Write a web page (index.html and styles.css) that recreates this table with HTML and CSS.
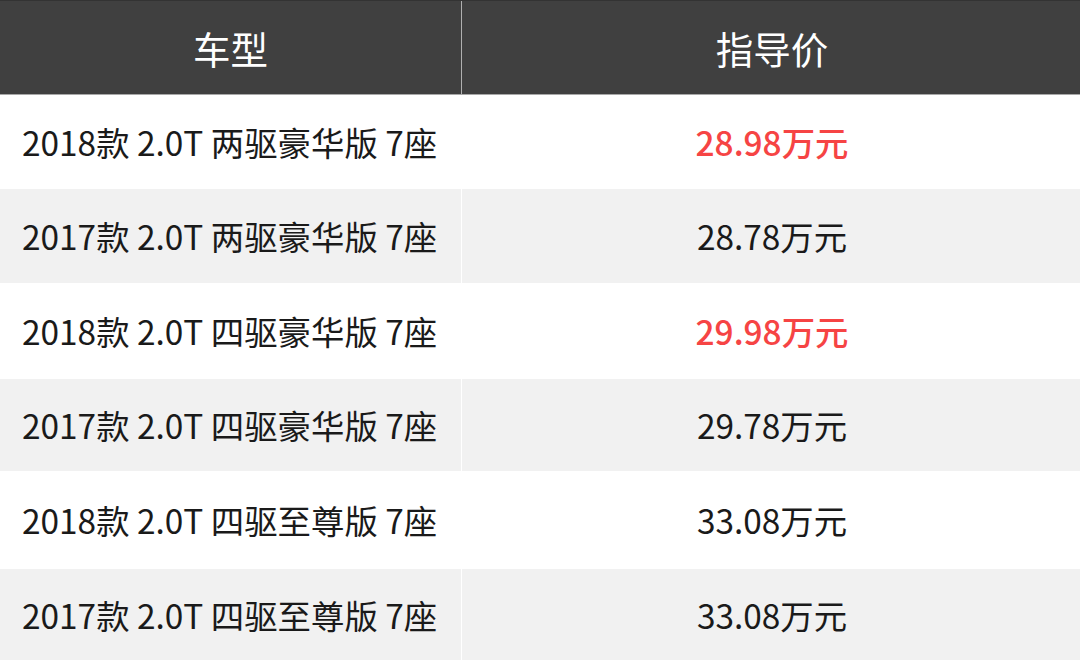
FILE: index.html
```html
<!DOCTYPE html>
<html lang="zh-CN">
<head>
<meta charset="utf-8">
<title>车型指导价</title>
<link rel="stylesheet" href="styles.css">
</head>
<body>
<div class="table">
  <div class="row head">
    <div class="cell name">车型</div>
    <div class="cell price">指导价</div>
  </div>
  <div class="row odd">
    <div class="cell name">2018款 2.0T 两驱豪华版 7座</div>
    <div class="cell price hot">28.98万元</div>
  </div>
  <div class="row even">
    <div class="cell name">2017款 2.0T 两驱豪华版 7座</div>
    <div class="cell price">28.78万元</div>
  </div>
  <div class="row odd">
    <div class="cell name">2018款 2.0T 四驱豪华版 7座</div>
    <div class="cell price hot">29.98万元</div>
  </div>
  <div class="row even">
    <div class="cell name">2017款 2.0T 四驱豪华版 7座</div>
    <div class="cell price">29.78万元</div>
  </div>
  <div class="row odd">
    <div class="cell name">2018款 2.0T 四驱至尊版 7座</div>
    <div class="cell price">33.08万元</div>
  </div>
  <div class="row even">
    <div class="cell name">2017款 2.0T 四驱至尊版 7座</div>
    <div class="cell price">33.08万元</div>
  </div>
</div>
</body>
</html>
```

FILE: styles.css
```css
html, body {
  margin: 0;
  padding: 0;
  background: #ffffff;
}

body {
  font-family: "Noto Sans CJK SC", "Noto Sans", sans-serif;
  color: #1a1a1a;
}

.table {
  width: 1080px;
  display: flex;
  flex-direction: column;
}

.row {
  display: grid;
  grid-template-columns: 462px 1fr;
  height: 94px;
}

.cell {
  display: flex;
  align-items: center;
  box-sizing: border-box;
  font-size: 33.4px;
  line-height: 1;
}

.cell.name {
  border-right: 1px solid #ffffff;
  padding-left: 22px;
}

.cell.price {
  justify-content: center;
  padding-left: 2px;
}

.head {
  background: #404040;
  border-top: 1px solid #333333;
  border-bottom: 1px solid #a8a8a8;
  height: 95px;
  box-sizing: border-box;
}

.head .cell {
  color: #ffffff;
  font-size: 37.5px;
  justify-content: center;
}

.head .cell.name {
  border-right: 1px solid #b0b0b0;
  padding-left: 0;
}

.odd {
  background: #ffffff;
}

.even {
  background: #f1f1f1;
}

.row:nth-child(4) { height: 96px; }
.row:nth-child(5) { height: 92px; }
.row:nth-child(6) { height: 98px; }
.row:nth-child(7) { height: 91px; }

.hot {
  color: #f64444;
  font-weight: 500;
}
```
